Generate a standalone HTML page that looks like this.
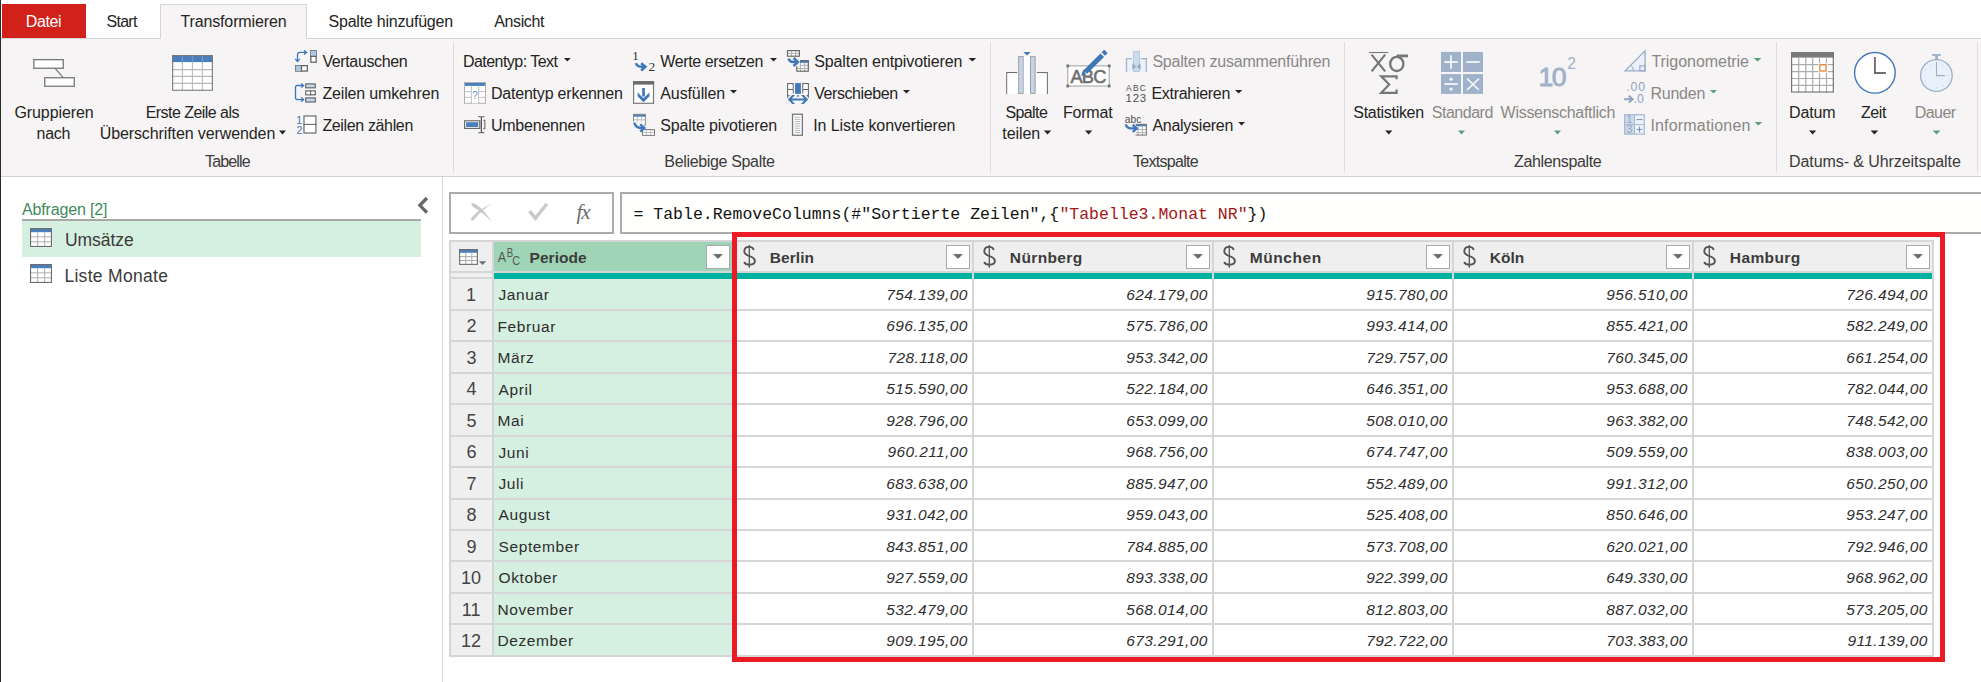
<!DOCTYPE html>
<html><head><meta charset="utf-8"><style>
html,body{margin:0;padding:0;}
body{width:1981px;height:682px;overflow:hidden;position:relative;background:#fff;}
div{position:absolute;}
span{position:absolute;white-space:pre;line-height:20px;}
svg{position:absolute;left:0;top:0;}
</style></head><body>
<div style="left:0px;top:0px;width:1981px;height:39px;background:#ffffff;"></div><div style="left:0px;top:39px;width:1981px;height:137px;background:#f6f4f4;"></div><div style="left:0px;top:176px;width:1981px;height:1px;background:#d4d2d2;"></div><div style="left:0px;top:38px;width:1981px;height:1px;background:#d6d4d4;"></div><div style="left:2px;top:4px;width:84px;height:34px;background:#d2201a;"></div><div style="left:160px;top:4px;width:147px;height:35px;background:#f6f4f4;box-sizing:border-box;border:1px solid #d6d4d4;border-bottom:none"></div><div style="left:453px;top:42px;width:1px;height:131px;background:#dedcdc;"></div><div style="left:990px;top:42px;width:1px;height:131px;background:#dedcdc;"></div><div style="left:1344px;top:42px;width:1px;height:131px;background:#dedcdc;"></div><div style="left:1776px;top:42px;width:1px;height:131px;background:#dedcdc;"></div><div style="left:1977px;top:42px;width:1px;height:131px;background:#dedcdc;"></div><div style="left:0px;top:0px;width:1px;height:682px;background:#2b2b2b;"></div><div style="left:22px;top:219px;width:399px;height:2px;background:#a8a8a8;"></div><div style="left:22px;top:221px;width:399px;height:35.6px;background:#d5efe0;"></div><div style="left:442px;top:177px;width:1px;height:505px;background:#d9d9d9;"></div><div style="left:449px;top:192px;width:165px;height:41.5px;background:#ffffff;box-sizing:border-box;border:2px solid #ababab"></div><div style="left:620px;top:192px;width:1400px;height:41.5px;background:#fffffd;box-sizing:border-box;border:2px solid #ababab"></div><div style="left:449px;top:240px;width:1485px;height:2px;background:#d6d6d6;"></div><div style="left:449px;top:240px;width:2px;height:417px;background:#d6d6d6;"></div><div style="left:451px;top:242px;width:41px;height:29px;background:#efefef;"></div><div style="left:494px;top:242px;width:238px;height:29px;background:#9fd5b6;"></div><div style="left:734px;top:242px;width:238px;height:29px;background:#efefef;"></div><div style="left:974px;top:242px;width:238px;height:29px;background:#efefef;"></div><div style="left:1214px;top:242px;width:238px;height:29px;background:#efefef;"></div><div style="left:1454px;top:242px;width:238px;height:29px;background:#efefef;"></div><div style="left:1694px;top:242px;width:238px;height:29px;background:#efefef;"></div><div style="left:451px;top:271px;width:1483px;height:2px;background:#d6d6d6;"></div><div style="left:451px;top:273px;width:41px;height:4px;background:#efefef;"></div><div style="left:451px;top:277px;width:41px;height:2px;background:#d6d6d6;"></div><div style="left:494px;top:273px;width:1438px;height:6px;background:#01b2a0;"></div><div style="left:492px;top:242px;width:2px;height:415px;background:#d6d6d6;"></div><div style="left:732px;top:242px;width:2px;height:415px;background:#d6d6d6;"></div><div style="left:972px;top:242px;width:2px;height:415px;background:#d6d6d6;"></div><div style="left:1212px;top:242px;width:2px;height:415px;background:#d6d6d6;"></div><div style="left:1452px;top:242px;width:2px;height:415px;background:#d6d6d6;"></div><div style="left:1692px;top:242px;width:2px;height:415px;background:#d6d6d6;"></div><div style="left:1932px;top:242px;width:2px;height:415px;background:#d6d6d6;"></div><div style="left:451px;top:279px;width:41.3px;height:30px;background:#efefef;"></div><div style="left:494px;top:279px;width:238px;height:30px;background:#d5efe0;"></div><div style="left:734px;top:279px;width:238px;height:30px;background:#ffffff;"></div><div style="left:974px;top:279px;width:238px;height:30px;background:#ffffff;"></div><div style="left:1214px;top:279px;width:238px;height:30px;background:#ffffff;"></div><div style="left:1454px;top:279px;width:238px;height:30px;background:#ffffff;"></div><div style="left:1694px;top:279px;width:238px;height:30px;background:#ffffff;"></div><div style="left:451px;top:309px;width:1483px;height:2px;background:#d6d6d6;"></div><div style="left:451px;top:311px;width:41.3px;height:29px;background:#efefef;"></div><div style="left:494px;top:311px;width:238px;height:29px;background:#d5efe0;"></div><div style="left:734px;top:311px;width:238px;height:29px;background:#ffffff;"></div><div style="left:974px;top:311px;width:238px;height:29px;background:#ffffff;"></div><div style="left:1214px;top:311px;width:238px;height:29px;background:#ffffff;"></div><div style="left:1454px;top:311px;width:238px;height:29px;background:#ffffff;"></div><div style="left:1694px;top:311px;width:238px;height:29px;background:#ffffff;"></div><div style="left:451px;top:340px;width:1483px;height:2px;background:#d6d6d6;"></div><div style="left:451px;top:342px;width:41.3px;height:30px;background:#efefef;"></div><div style="left:494px;top:342px;width:238px;height:30px;background:#d5efe0;"></div><div style="left:734px;top:342px;width:238px;height:30px;background:#ffffff;"></div><div style="left:974px;top:342px;width:238px;height:30px;background:#ffffff;"></div><div style="left:1214px;top:342px;width:238px;height:30px;background:#ffffff;"></div><div style="left:1454px;top:342px;width:238px;height:30px;background:#ffffff;"></div><div style="left:1694px;top:342px;width:238px;height:30px;background:#ffffff;"></div><div style="left:451px;top:372px;width:1483px;height:2px;background:#d6d6d6;"></div><div style="left:451px;top:374px;width:41.3px;height:29px;background:#efefef;"></div><div style="left:494px;top:374px;width:238px;height:29px;background:#d5efe0;"></div><div style="left:734px;top:374px;width:238px;height:29px;background:#ffffff;"></div><div style="left:974px;top:374px;width:238px;height:29px;background:#ffffff;"></div><div style="left:1214px;top:374px;width:238px;height:29px;background:#ffffff;"></div><div style="left:1454px;top:374px;width:238px;height:29px;background:#ffffff;"></div><div style="left:1694px;top:374px;width:238px;height:29px;background:#ffffff;"></div><div style="left:451px;top:403px;width:1483px;height:2px;background:#d6d6d6;"></div><div style="left:451px;top:405px;width:41.3px;height:30px;background:#efefef;"></div><div style="left:494px;top:405px;width:238px;height:30px;background:#d5efe0;"></div><div style="left:734px;top:405px;width:238px;height:30px;background:#ffffff;"></div><div style="left:974px;top:405px;width:238px;height:30px;background:#ffffff;"></div><div style="left:1214px;top:405px;width:238px;height:30px;background:#ffffff;"></div><div style="left:1454px;top:405px;width:238px;height:30px;background:#ffffff;"></div><div style="left:1694px;top:405px;width:238px;height:30px;background:#ffffff;"></div><div style="left:451px;top:435px;width:1483px;height:2px;background:#d6d6d6;"></div><div style="left:451px;top:437px;width:41.3px;height:29px;background:#efefef;"></div><div style="left:494px;top:437px;width:238px;height:29px;background:#d5efe0;"></div><div style="left:734px;top:437px;width:238px;height:29px;background:#ffffff;"></div><div style="left:974px;top:437px;width:238px;height:29px;background:#ffffff;"></div><div style="left:1214px;top:437px;width:238px;height:29px;background:#ffffff;"></div><div style="left:1454px;top:437px;width:238px;height:29px;background:#ffffff;"></div><div style="left:1694px;top:437px;width:238px;height:29px;background:#ffffff;"></div><div style="left:451px;top:466px;width:1483px;height:2px;background:#d6d6d6;"></div><div style="left:451px;top:468px;width:41.3px;height:30px;background:#efefef;"></div><div style="left:494px;top:468px;width:238px;height:30px;background:#d5efe0;"></div><div style="left:734px;top:468px;width:238px;height:30px;background:#ffffff;"></div><div style="left:974px;top:468px;width:238px;height:30px;background:#ffffff;"></div><div style="left:1214px;top:468px;width:238px;height:30px;background:#ffffff;"></div><div style="left:1454px;top:468px;width:238px;height:30px;background:#ffffff;"></div><div style="left:1694px;top:468px;width:238px;height:30px;background:#ffffff;"></div><div style="left:451px;top:498px;width:1483px;height:2px;background:#d6d6d6;"></div><div style="left:451px;top:500px;width:41.3px;height:29px;background:#efefef;"></div><div style="left:494px;top:500px;width:238px;height:29px;background:#d5efe0;"></div><div style="left:734px;top:500px;width:238px;height:29px;background:#ffffff;"></div><div style="left:974px;top:500px;width:238px;height:29px;background:#ffffff;"></div><div style="left:1214px;top:500px;width:238px;height:29px;background:#ffffff;"></div><div style="left:1454px;top:500px;width:238px;height:29px;background:#ffffff;"></div><div style="left:1694px;top:500px;width:238px;height:29px;background:#ffffff;"></div><div style="left:451px;top:529px;width:1483px;height:2px;background:#d6d6d6;"></div><div style="left:451px;top:531px;width:41.3px;height:29px;background:#efefef;"></div><div style="left:494px;top:531px;width:238px;height:29px;background:#d5efe0;"></div><div style="left:734px;top:531px;width:238px;height:29px;background:#ffffff;"></div><div style="left:974px;top:531px;width:238px;height:29px;background:#ffffff;"></div><div style="left:1214px;top:531px;width:238px;height:29px;background:#ffffff;"></div><div style="left:1454px;top:531px;width:238px;height:29px;background:#ffffff;"></div><div style="left:1694px;top:531px;width:238px;height:29px;background:#ffffff;"></div><div style="left:451px;top:560px;width:1483px;height:2px;background:#d6d6d6;"></div><div style="left:451px;top:562px;width:41.3px;height:30px;background:#efefef;"></div><div style="left:494px;top:562px;width:238px;height:30px;background:#d5efe0;"></div><div style="left:734px;top:562px;width:238px;height:30px;background:#ffffff;"></div><div style="left:974px;top:562px;width:238px;height:30px;background:#ffffff;"></div><div style="left:1214px;top:562px;width:238px;height:30px;background:#ffffff;"></div><div style="left:1454px;top:562px;width:238px;height:30px;background:#ffffff;"></div><div style="left:1694px;top:562px;width:238px;height:30px;background:#ffffff;"></div><div style="left:451px;top:592px;width:1483px;height:2px;background:#d6d6d6;"></div><div style="left:451px;top:594px;width:41.3px;height:29px;background:#efefef;"></div><div style="left:494px;top:594px;width:238px;height:29px;background:#d5efe0;"></div><div style="left:734px;top:594px;width:238px;height:29px;background:#ffffff;"></div><div style="left:974px;top:594px;width:238px;height:29px;background:#ffffff;"></div><div style="left:1214px;top:594px;width:238px;height:29px;background:#ffffff;"></div><div style="left:1454px;top:594px;width:238px;height:29px;background:#ffffff;"></div><div style="left:1694px;top:594px;width:238px;height:29px;background:#ffffff;"></div><div style="left:451px;top:623px;width:1483px;height:2px;background:#d6d6d6;"></div><div style="left:451px;top:625px;width:41.3px;height:30px;background:#efefef;"></div><div style="left:494px;top:625px;width:238px;height:30px;background:#d5efe0;"></div><div style="left:734px;top:625px;width:238px;height:30px;background:#ffffff;"></div><div style="left:974px;top:625px;width:238px;height:30px;background:#ffffff;"></div><div style="left:1214px;top:625px;width:238px;height:30px;background:#ffffff;"></div><div style="left:1454px;top:625px;width:238px;height:30px;background:#ffffff;"></div><div style="left:1694px;top:625px;width:238px;height:30px;background:#ffffff;"></div><div style="left:451px;top:655px;width:1483px;height:2px;background:#d6d6d6;"></div><div style="left:946.2px;top:245.2px;width:23.8px;height:23.5px;background:#ffffff;box-sizing:border-box;border:1px solid #a9a9a9"></div><div style="left:1186.2px;top:245.2px;width:23.8px;height:23.5px;background:#ffffff;box-sizing:border-box;border:1px solid #a9a9a9"></div><div style="left:1426.2px;top:245.2px;width:23.8px;height:23.5px;background:#ffffff;box-sizing:border-box;border:1px solid #a9a9a9"></div><div style="left:1666.2px;top:245.2px;width:23.8px;height:23.5px;background:#ffffff;box-sizing:border-box;border:1px solid #a9a9a9"></div><div style="left:1906.2px;top:245.2px;width:23.8px;height:23.5px;background:#ffffff;box-sizing:border-box;border:1px solid #a9a9a9"></div><div style="left:706.1px;top:245.2px;width:23.6px;height:23.8px;background:#ffffff;box-sizing:border-box;border:1px solid #a9a9a9"></div><div style="left:732px;top:232px;width:1213px;height:430px;background:transparent;box-sizing:border-box;border:5px solid #ea1b24"></div>
<svg width="1981" height="682" viewBox="0 0 1981 682"><polygon points="279,130.5 286,130.5 282.5,134.5" fill="#252423"/><polygon points="1043.8,130.5 1051.2,130.5 1047.5,134.5" fill="#252423"/><polygon points="1084.9,130.5 1092.3,130.5 1088.6,134.5" fill="#252423"/><polygon points="1385.2,130.5 1392.4,130.5 1388.8000000000002,134.5" fill="#252423"/><polygon points="1458,130.5 1465,130.5 1461.5,134.5" fill="#5a9e78"/><polygon points="1554,130.5 1561,130.5 1557.5,134.5" fill="#5a9e78"/><polygon points="1809,130.5 1816.2,130.5 1812.6,134.5" fill="#252423"/><polygon points="1870.6,130.5 1878.2,130.5 1874.4,134.5" fill="#252423"/><polygon points="1932.8,130.5 1940.4,130.5 1936.6,134.5" fill="#5a9e78"/><polygon points="564,58 570.7,58 567.35,61.5" fill="#252423"/><polygon points="770,58 777,58 773.5,61.5" fill="#252423"/><polygon points="730,90 737,90 733.5,93.5" fill="#252423"/><polygon points="968.5,58 976.2,58 972.35,61.5" fill="#252423"/><polygon points="903,90 910,90 906.5,93.5" fill="#252423"/><polygon points="1235,90 1242.3,90 1238.65,93.5" fill="#252423"/><polygon points="1238.2,122 1245,122 1241.6,125.5" fill="#252423"/><polygon points="1753.6,58 1761.4,58 1757.5,61.5" fill="#5a9e78"/><polygon points="1710,90 1717,90 1713.5,93.5" fill="#5a9e78"/><polygon points="1754.6,122 1762.2,122 1758.4,125.5" fill="#5a9e78"/><g transform="translate(0,0)"><path d="M753.9,249.8 C753,247.8 751.2,246.9 749.1,246.9 C746.1,246.9 744.3,248.6 744.3,251.2 C744.3,254.2 746.8,255.1 749.6,256.1 C752.8,257.2 754.9,258.6 754.9,261.1 C754.9,263.4 752.8,264.7 749.5,264.7 C746.9,264.7 745,263.7 744.1,262" fill="none" stroke="#555" stroke-width="1.9"/><line x1="749.3" y1="245.1" x2="749.3" y2="267.7" stroke="#555" stroke-width="1.3"/></g><polygon points="953,254 963,254 958.0,259" fill="#6e6e6e"/><g transform="translate(240,0)"><path d="M753.9,249.8 C753,247.8 751.2,246.9 749.1,246.9 C746.1,246.9 744.3,248.6 744.3,251.2 C744.3,254.2 746.8,255.1 749.6,256.1 C752.8,257.2 754.9,258.6 754.9,261.1 C754.9,263.4 752.8,264.7 749.5,264.7 C746.9,264.7 745,263.7 744.1,262" fill="none" stroke="#555" stroke-width="1.9"/><line x1="749.3" y1="245.1" x2="749.3" y2="267.7" stroke="#555" stroke-width="1.3"/></g><polygon points="1193,254 1203,254 1198.0,259" fill="#6e6e6e"/><g transform="translate(480,0)"><path d="M753.9,249.8 C753,247.8 751.2,246.9 749.1,246.9 C746.1,246.9 744.3,248.6 744.3,251.2 C744.3,254.2 746.8,255.1 749.6,256.1 C752.8,257.2 754.9,258.6 754.9,261.1 C754.9,263.4 752.8,264.7 749.5,264.7 C746.9,264.7 745,263.7 744.1,262" fill="none" stroke="#555" stroke-width="1.9"/><line x1="749.3" y1="245.1" x2="749.3" y2="267.7" stroke="#555" stroke-width="1.3"/></g><polygon points="1433,254 1443,254 1438.0,259" fill="#6e6e6e"/><g transform="translate(720,0)"><path d="M753.9,249.8 C753,247.8 751.2,246.9 749.1,246.9 C746.1,246.9 744.3,248.6 744.3,251.2 C744.3,254.2 746.8,255.1 749.6,256.1 C752.8,257.2 754.9,258.6 754.9,261.1 C754.9,263.4 752.8,264.7 749.5,264.7 C746.9,264.7 745,263.7 744.1,262" fill="none" stroke="#555" stroke-width="1.9"/><line x1="749.3" y1="245.1" x2="749.3" y2="267.7" stroke="#555" stroke-width="1.3"/></g><polygon points="1673,254 1683,254 1678.0,259" fill="#6e6e6e"/><g transform="translate(960,0)"><path d="M753.9,249.8 C753,247.8 751.2,246.9 749.1,246.9 C746.1,246.9 744.3,248.6 744.3,251.2 C744.3,254.2 746.8,255.1 749.6,256.1 C752.8,257.2 754.9,258.6 754.9,261.1 C754.9,263.4 752.8,264.7 749.5,264.7 C746.9,264.7 745,263.7 744.1,262" fill="none" stroke="#555" stroke-width="1.9"/><line x1="749.3" y1="245.1" x2="749.3" y2="267.7" stroke="#555" stroke-width="1.3"/></g><polygon points="1913,254 1923,254 1918.0,259" fill="#6e6e6e"/><polygon points="713,254 723,254 718.0,259" fill="#6e6e6e"/><rect x="33.85" y="59.65" width="29.40" height="8.60" fill="#fff" stroke="#767676" stroke-width="1.3"/><rect x="44.75" y="77.75" width="29.50" height="8.50" fill="#fff" stroke="#767676" stroke-width="1.3"/><line x1="55.30" y1="68.60" x2="63.00" y2="77.30" stroke="#767676" stroke-width="1.2" stroke-linecap="butt"/><rect x="172.10" y="55.10" width="40.80" height="35.70" fill="#fff"/><rect x="172.10" y="55.10" width="40.80" height="7.00" fill="#4a7fbd"/><line x1="182.40" y1="62.10" x2="182.40" y2="90.80" stroke="#b8b8b8" stroke-width="1.1" stroke-linecap="butt"/><line x1="192.40" y1="62.10" x2="192.40" y2="90.80" stroke="#b8b8b8" stroke-width="1.1" stroke-linecap="butt"/><line x1="202.40" y1="62.10" x2="202.40" y2="90.80" stroke="#b8b8b8" stroke-width="1.1" stroke-linecap="butt"/><line x1="172.10" y1="69.60" x2="212.90" y2="69.60" stroke="#b8b8b8" stroke-width="1.1" stroke-linecap="butt"/><line x1="172.10" y1="76.40" x2="212.90" y2="76.40" stroke="#b8b8b8" stroke-width="1.1" stroke-linecap="butt"/><line x1="172.10" y1="83.40" x2="212.90" y2="83.40" stroke="#b8b8b8" stroke-width="1.1" stroke-linecap="butt"/><rect x="172.65" y="55.65" width="39.70" height="34.60" fill="none" stroke="#787878" stroke-width="1.1"/><line x1="182.40" y1="55.60" x2="182.40" y2="62.10" stroke="#7d9fc8" stroke-width="0.9" stroke-linecap="butt"/><line x1="192.40" y1="55.60" x2="192.40" y2="62.10" stroke="#7d9fc8" stroke-width="0.9" stroke-linecap="butt"/><line x1="202.40" y1="55.60" x2="202.40" y2="62.10" stroke="#7d9fc8" stroke-width="0.9" stroke-linecap="butt"/><rect x="310.85" y="50.65" width="5.30" height="11.60" fill="#fff" stroke="#666" stroke-width="1.3"/><rect x="310.90" y="50.70" width="5.20" height="5.60" fill="#a9c6e3"/><line x1="310.20" y1="56.40" x2="316.80" y2="56.40" stroke="#666" stroke-width="1.2" stroke-linecap="butt"/><rect x="295.75" y="65.65" width="11.60" height="5.40" fill="#fff" stroke="#666" stroke-width="1.3"/><rect x="295.80" y="65.70" width="5.70" height="5.30" fill="#a9c6e3"/><line x1="301.50" y1="65.00" x2="301.50" y2="71.70" stroke="#666" stroke-width="1.2" stroke-linecap="butt"/><path d="M297.5,61 L297.5,55 Q297.5,52.4 300,52.4 L306.4,52.4" fill="none" stroke="#3f78b8" stroke-width="1.3" /><path d="M295.3,58.8 L297.5,61.4 L299.7,58.8" fill="none" stroke="#3f78b8" stroke-width="1.3" /><path d="M304,50.3 L306.6,52.4 L304,54.5" fill="none" stroke="#3f78b8" stroke-width="1.3" /><rect x="305.70" y="83.90" width="9.60" height="3.90" fill="#c5d9ee" stroke="#6a6a6a" stroke-width="1.2"/><rect x="305.70" y="90.90" width="9.60" height="3.90" fill="#fff" stroke="#6a6a6a" stroke-width="1.2"/><rect x="305.70" y="97.90" width="9.60" height="4.10" fill="#c5d9ee" stroke="#6a6a6a" stroke-width="1.2"/><line x1="310.60" y1="90.30" x2="310.60" y2="95.40" stroke="#6a6a6a" stroke-width="1.1" stroke-linecap="butt"/><path d="M303.2,85.5 L297.5,85.5 Q295.5,85.5 295.5,87.5 L295.5,97.6 Q295.5,99.6 297.5,99.6 L303.2,99.6" fill="none" stroke="#3f78b8" stroke-width="1.3" /><path d="M301.2,83.4 L303.6,85.5 L301.2,87.6" fill="none" stroke="#3f78b8" stroke-width="1.3" /><path d="M301.2,97.5 L303.6,99.6 L301.2,101.7" fill="none" stroke="#3f78b8" stroke-width="1.3" /><rect x="304.00" y="116.00" width="11.90" height="17.00" fill="#fff" stroke="#6a6a6a" stroke-width="1.2"/><line x1="303.40" y1="124.40" x2="316.50" y2="124.40" stroke="#6a6a6a" stroke-width="1.1" stroke-linecap="butt"/><text x="296.2" y="123.9" font-family="Liberation Sans" font-size="10.6" fill="#3f78b8">1</text><text x="296.4" y="133.7" font-family="Liberation Sans" font-size="10.6" fill="#3f78b8">2</text><rect x="464.00" y="82.00" width="22.00" height="21.80" fill="#fff"/><rect x="464.00" y="82.00" width="22.00" height="3.90" fill="#4a7fbd"/><line x1="471.40" y1="85.90" x2="471.40" y2="103.80" stroke="#c0c0c0" stroke-width="1.0" stroke-linecap="butt"/><line x1="478.60" y1="85.90" x2="478.60" y2="103.80" stroke="#c0c0c0" stroke-width="1.0" stroke-linecap="butt"/><line x1="464.00" y1="91.60" x2="486.00" y2="91.60" stroke="#c0c0c0" stroke-width="1.0" stroke-linecap="butt"/><line x1="464.00" y1="97.30" x2="486.00" y2="97.30" stroke="#c0c0c0" stroke-width="1.0" stroke-linecap="butt"/><rect x="464.50" y="82.50" width="21.00" height="20.80" fill="none" stroke="#b0b0b0" stroke-width="1.0"/><rect x="471.90" y="86.40" width="6.20" height="16.90" fill="#fff"/><text x="472.3" y="98.6" font-family="Liberation Sans" font-size="10" fill="#5d8ed0">?</text><rect x="464.60" y="120.80" width="15.20" height="7.60" fill="#fff" stroke="#6b6b6b" stroke-width="1.2"/><rect x="466.10" y="122.20" width="12.20" height="4.80" fill="#4a7fbd"/><line x1="481.40" y1="116.80" x2="481.40" y2="132.60" stroke="#555" stroke-width="1.2" stroke-linecap="butt"/><path d="M478.4,116.6 Q481.4,117.2 484.4,116.6" fill="none" stroke="#555" stroke-width="1.0" /><path d="M478.4,132.8 Q481.4,132.2 484.4,132.8" fill="none" stroke="#555" stroke-width="1.0" /><path d="M483.4,120.4 L484.8,120.4 L484.8,128.6 L483.4,128.6" fill="none" stroke="#6b6b6b" stroke-width="1.1" /><text x="632.2" y="60" font-family="Liberation Serif" font-size="13" fill="#333">1</text><text x="648.4" y="71" font-family="Liberation Serif" font-size="13.5" fill="#333">2</text><path d="M635.8,63.2 Q637.5,66.8 641.5,66.8 L645.5,66.8" fill="none" stroke="#3f78b8" stroke-width="2.6" /><path d="M641.2,63.2 L645.4,66.8 L641.2,70.4" fill="none" stroke="#3f78b8" stroke-width="2.6" /><rect x="633.60" y="81.80" width="19.90" height="21.50" fill="#fff" stroke="#7a7a7a" stroke-width="1.2"/><rect x="633.00" y="81.20" width="21.10" height="3.40" fill="#6a6a6a"/><rect x="642.20" y="88.00" width="2.70" height="8.50" fill="#3f78b8"/><polygon points="637.6,92.6 643.55,98.2 649.5,92.6 649.5,96.2 643.55,102.2 637.6,96.2" fill="#3f78b8"/><rect x="633.00" y="113.90" width="12.90" height="11.60" fill="#fff"/><rect x="633.00" y="113.90" width="12.90" height="2.80" fill="#4a7fbd"/><line x1="637.30" y1="116.70" x2="637.30" y2="125.50" stroke="#bdbdbd" stroke-width="1.0" stroke-linecap="butt"/><line x1="641.60" y1="116.70" x2="641.60" y2="125.50" stroke="#bdbdbd" stroke-width="1.0" stroke-linecap="butt"/><line x1="633.00" y1="119.80" x2="645.90" y2="119.80" stroke="#bdbdbd" stroke-width="1.0" stroke-linecap="butt"/><rect x="633.50" y="114.40" width="11.90" height="10.60" fill="none" stroke="#8a8a8a" stroke-width="1.0"/><rect x="642.10" y="129.10" width="12.90" height="6.80" fill="#fff"/><line x1="646.40" y1="129.10" x2="646.40" y2="135.90" stroke="#bdbdbd" stroke-width="1.0" stroke-linecap="butt"/><line x1="650.70" y1="129.10" x2="650.70" y2="135.90" stroke="#bdbdbd" stroke-width="1.0" stroke-linecap="butt"/><line x1="642.10" y1="132.50" x2="655.00" y2="132.50" stroke="#bdbdbd" stroke-width="1.0" stroke-linecap="butt"/><rect x="642.60" y="129.60" width="11.90" height="5.80" fill="none" stroke="#7a7a7a" stroke-width="1.0"/><rect x="632" y="121.6" width="12" height="5" fill="#f6f4f4"/><path d="M634.2,122.6 Q636,128 641,128 L644.2,128" fill="none" stroke="#3f78b8" stroke-width="2.4" /><path d="M640.2,124.4 L644.3,128 L640.2,131.6" fill="none" stroke="#3f78b8" stroke-width="2.4" /><rect x="786.90" y="50.00" width="13.10" height="6.80" fill="#fff"/><line x1="791.50" y1="50.00" x2="791.50" y2="56.80" stroke="#b5b5b5" stroke-width="1.2" stroke-linecap="butt"/><line x1="795.60" y1="50.00" x2="795.60" y2="56.80" stroke="#b5b5b5" stroke-width="1.2" stroke-linecap="butt"/><line x1="786.90" y1="53.40" x2="800.00" y2="53.40" stroke="#b5b5b5" stroke-width="1.2" stroke-linecap="butt"/><rect x="787.50" y="50.60" width="11.90" height="5.60" fill="none" stroke="#6a6a6a" stroke-width="1.2"/><rect x="796.20" y="60.00" width="12.70" height="11.80" fill="#fff"/><rect x="796.20" y="60.00" width="12.70" height="2.90" fill="#4a7fbd"/><line x1="800.50" y1="62.90" x2="800.50" y2="71.80" stroke="#b5b5b5" stroke-width="1.2" stroke-linecap="butt"/><line x1="804.60" y1="62.90" x2="804.60" y2="71.80" stroke="#b5b5b5" stroke-width="1.2" stroke-linecap="butt"/><line x1="796.20" y1="65.40" x2="808.90" y2="65.40" stroke="#b5b5b5" stroke-width="1.2" stroke-linecap="butt"/><line x1="796.20" y1="68.50" x2="808.90" y2="68.50" stroke="#b5b5b5" stroke-width="1.2" stroke-linecap="butt"/><rect x="796.80" y="60.60" width="11.50" height="10.60" fill="none" stroke="#6a6a6a" stroke-width="1.2"/><rect x="795.5" y="57.8" width="4.5" height="8.5" fill="#f6f4f4"/><path d="M788.4,58.6 Q789.6,62 793.5,62 L797.8,62" fill="none" stroke="#3f78b8" stroke-width="2.5" /><path d="M793.6,58 L797.9,62 L793.6,66" fill="none" stroke="#3f78b8" stroke-width="2.5" /><path d="M787.7,97.8 L787.7,83.7 L793.1,83.7 L793.1,89.2" fill="none" stroke="#666" stroke-width="1.2" /><line x1="787.70" y1="89.50" x2="793.10" y2="89.50" stroke="#666" stroke-width="1.1" stroke-linecap="butt"/><line x1="793.10" y1="89.50" x2="793.10" y2="93.50" stroke="#666" stroke-width="1.2" stroke-linecap="butt"/><line x1="787.70" y1="95.60" x2="789.50" y2="95.60" stroke="#666" stroke-width="1.0" stroke-linecap="butt"/><path d="M808.3,97.8 L808.3,83.7 L802.9,83.7 L802.9,93.5" fill="none" stroke="#666" stroke-width="1.2" /><line x1="802.90" y1="89.50" x2="808.30" y2="89.50" stroke="#666" stroke-width="1.1" stroke-linecap="butt"/><line x1="806.50" y1="95.60" x2="808.30" y2="95.60" stroke="#666" stroke-width="1.0" stroke-linecap="butt"/><rect x="788.30" y="84.30" width="4.20" height="4.60" fill="#fff"/><rect x="788.30" y="90.10" width="4.20" height="4.80" fill="#fff"/><rect x="803.50" y="84.30" width="4.20" height="4.60" fill="#fff"/><rect x="803.50" y="90.10" width="4.20" height="4.80" fill="#fff"/><rect x="795.10" y="83.10" width="5.80" height="10.70" fill="#3f78b8"/><polygon points="787.9,99.5 792.2,95 795,95 791.8,98.4 804.2,98.4 801,95 803.8,95 808.1,99.5 803.8,104 801,104 804.2,100.6 791.8,100.6 795,104 792.2,104" fill="#3f78b8"/><polygon points="796.5,96.6 798,94.6 799.5,96.6" fill="#3f78b8"/><rect x="792.55" y="114.25" width="9.80" height="21.00" fill="#fff" stroke="#777" stroke-width="1.3"/><line x1="794.60" y1="117.20" x2="800.30" y2="117.20" stroke="#9a9a9a" stroke-width="0.7" stroke-linecap="butt"/><line x1="794.60" y1="119.40" x2="800.30" y2="119.40" stroke="#9a9a9a" stroke-width="0.7" stroke-linecap="butt"/><line x1="794.60" y1="121.60" x2="800.30" y2="121.60" stroke="#9a9a9a" stroke-width="0.7" stroke-linecap="butt"/><line x1="794.60" y1="123.80" x2="800.30" y2="123.80" stroke="#9a9a9a" stroke-width="0.7" stroke-linecap="butt"/><line x1="794.60" y1="126.00" x2="800.30" y2="126.00" stroke="#9a9a9a" stroke-width="0.7" stroke-linecap="butt"/><line x1="794.60" y1="128.20" x2="800.30" y2="128.20" stroke="#9a9a9a" stroke-width="0.7" stroke-linecap="butt"/><line x1="794.60" y1="130.40" x2="800.30" y2="130.40" stroke="#9a9a9a" stroke-width="0.7" stroke-linecap="butt"/><line x1="794.60" y1="132.60" x2="800.30" y2="132.60" stroke="#9a9a9a" stroke-width="0.7" stroke-linecap="butt"/><path d="M1006.8,93.9 L1006.8,72.6 L1017.2,72.6" fill="none" stroke="#6e6e6e" stroke-width="1.2" /><path d="M1047.3,93.9 L1047.3,72.6 L1036.9,72.6" fill="none" stroke="#6e6e6e" stroke-width="1.2" /><rect x="1007.40" y="73.20" width="10.60" height="20.70" fill="#fff"/><rect x="1036.20" y="73.20" width="10.50" height="20.70" fill="#fff"/><rect x="1018.70" y="56.60" width="4.60" height="36.80" fill="#c3d5ea" stroke="#a0a0a0" stroke-width="1.0"/><rect x="1030.50" y="56.60" width="4.60" height="36.80" fill="#c3d5ea" stroke="#a0a0a0" stroke-width="1.0"/><rect x="1023.80" y="56.60" width="6.20" height="37.30" fill="#fff"/><polygon points="1023.4,52 1030.6,52 1027,55.4" fill="#3f78b8"/><rect x="1067.8" y="65.9" width="41.4" height="20.1" fill="#fff" stroke="#a0a0a0" stroke-width="1"/><rect x="1066.40" y="64.50" width="2.80" height="2.80" fill="#707070"/><rect x="1107.80" y="64.50" width="2.80" height="2.80" fill="#707070"/><rect x="1066.40" y="84.60" width="2.80" height="2.80" fill="#707070"/><rect x="1107.80" y="84.60" width="2.80" height="2.80" fill="#707070"/><text x="1070.4" y="82.8" font-family="Liberation Sans" font-size="18.2" fill="#707070" stroke="#707070" stroke-width="0.6" letter-spacing="-0.7">ABC</text><polygon points="1081.2,75.9 1082.6,71 1086.2,74.5" fill="#3f78b8"/><polygon points="1083.6,70.2 1100.5,53.5 1104,57 1087.1,73.8" fill="#3f78b8"/><polygon points="1101.6,52.3 1104.2,49.7 1107.6,53.1 1105,55.7" fill="#3f78b8"/><polygon points="1083.6,69.8 1087.4,73.6 1085,76 1080.5,77" fill="#fff" opacity="0"/><rect x="1126.50" y="58.60" width="5.80" height="13.40" fill="#eaf2fc"/><rect x="1140.50" y="58.60" width="5.80" height="13.40" fill="#eaf2fc"/><path d="M1126.5,72 L1126.5,58.6 L1131.9,58.6" fill="none" stroke="#a3b5cf" stroke-width="1.3" /><path d="M1146.3,72 L1146.3,58.6 L1140.9,58.6" fill="none" stroke="#a3b5cf" stroke-width="1.3" /><rect x="1133.40" y="51.40" width="6.10" height="20.10" fill="#ccdaec" stroke="#b9c9de" stroke-width="1.0"/><polygon points="1132.3,63.2 1136.4,66.5 1132.3,69.8" fill="#98aac4"/><polygon points="1140.6,63.2 1136.5,66.5 1140.6,69.8" fill="#98aac4"/><text x="1126" y="90.9" font-family="Liberation Sans" font-size="8.4" fill="#505050" letter-spacing="1.3">ABC</text><text x="1125.4" y="101.8" font-family="Liberation Sans" font-size="11.4" fill="#505050" letter-spacing="0.9">123</text><text x="1124.8" y="122.6" font-family="Liberation Sans" font-size="10.2" fill="#505050" letter-spacing="0">abc</text><rect x="1133.80" y="123.90" width="13.10" height="11.70" fill="#fff"/><rect x="1133.80" y="123.90" width="13.10" height="2.50" fill="#4a7fbd"/><line x1="1138.10" y1="126.40" x2="1138.10" y2="135.60" stroke="#b5b5b5" stroke-width="1.1" stroke-linecap="butt"/><line x1="1142.40" y1="126.40" x2="1142.40" y2="135.60" stroke="#b5b5b5" stroke-width="1.1" stroke-linecap="butt"/><line x1="1133.80" y1="129.60" x2="1146.90" y2="129.60" stroke="#b5b5b5" stroke-width="1.1" stroke-linecap="butt"/><line x1="1133.80" y1="132.60" x2="1146.90" y2="132.60" stroke="#b5b5b5" stroke-width="1.1" stroke-linecap="butt"/><rect x="1134.35" y="124.45" width="12.00" height="10.60" fill="none" stroke="#777" stroke-width="1.1"/><rect x="1133" y="123.9" width="2.6" height="12" fill="#f6f4f4"/><path d="M1125.8,124.4 Q1127,128.4 1131,128.4 L1136.6,128.4" fill="none" stroke="#3f78b8" stroke-width="2.3" /><path d="M1132.6,124.8 L1136.8,128.4 L1132.6,132" fill="none" stroke="#3f78b8" stroke-width="2.3" /><line x1="1369.00" y1="52.50" x2="1388.20" y2="52.50" stroke="#777777" stroke-width="1.1" stroke-linecap="butt"/><path d="M1371.6,54.6 L1385.2,71.4 M1385.2,54.6 L1371.6,71.4" fill="none" stroke="#777777" stroke-width="2.2" /><ellipse cx="1396.8" cy="63.9" rx="6.6" ry="7.1" fill="none" stroke="#777777" stroke-width="2.3"/><path d="M1396.6,55.9 L1408,55.9" fill="none" stroke="#777777" stroke-width="2.8" /><path d="M1396.6,79.2 L1396.6,76.3 L1381.2,76.3 L1389.2,84.6 L1381.2,92.8 L1396.6,92.8 L1396.6,89.6" fill="none" stroke="#777777" stroke-width="2.2" stroke-linejoin="miter"/><rect x="1441.00" y="51.90" width="20.00" height="20.10" fill="#a0b1ca"/><rect x="1463.00" y="51.90" width="20.00" height="20.10" fill="#a0b1ca"/><rect x="1441.00" y="74.10" width="20.00" height="19.80" fill="#a0b1ca"/><rect x="1463.00" y="74.10" width="20.00" height="19.80" fill="#a0b1ca"/><line x1="1444.30" y1="62.00" x2="1457.70" y2="62.00" stroke="#f4f7fb" stroke-width="1.8" stroke-linecap="butt"/><line x1="1451.00" y1="55.20" x2="1451.00" y2="68.80" stroke="#f4f7fb" stroke-width="1.8" stroke-linecap="butt"/><line x1="1466.30" y1="62.00" x2="1479.70" y2="62.00" stroke="#f4f7fb" stroke-width="1.8" stroke-linecap="butt"/><line x1="1444.30" y1="84.00" x2="1457.70" y2="84.00" stroke="#f4f7fb" stroke-width="1.8" stroke-linecap="butt"/><circle cx="1451" cy="79.2" r="1.6" fill="#f4f7fb"/><circle cx="1451" cy="89" r="1.6" fill="#f4f7fb"/><line x1="1467.00" y1="78.60" x2="1479.00" y2="90.00" stroke="#f4f7fb" stroke-width="1.7" stroke-linecap="butt"/><line x1="1479.00" y1="78.60" x2="1467.00" y2="90.00" stroke="#f4f7fb" stroke-width="1.7" stroke-linecap="butt"/><text x="1538.4" y="86.2" font-family="Liberation Sans" font-size="26.6" fill="#a0b1ca" stroke="#a0b1ca" stroke-width="0.9" letter-spacing="-1.4">10</text><text x="1567.2" y="68.8" font-family="Liberation Sans" font-size="15.6" fill="#a0b1ca">2</text><polygon points="1625,70.9 1645.1,50.9 1645.1,70.9" fill="#eaf1fb" stroke="#98acc8" stroke-width="1.3" stroke-linejoin="miter"/><rect x="1639.9" y="65.8" width="5.2" height="5.1" fill="none" stroke="#98acc8" stroke-width="1.2"/><path d="M1631.2,65.4 Q1633.4,67.6 1633.6,71" fill="none" stroke="#98acc8" stroke-width="1.0" /><text x="1626.2" y="90.8" font-family="Liberation Sans" font-size="12.2" fill="#8fa2bf" letter-spacing="0.9">.00</text><text x="1633.6" y="102.8" font-family="Liberation Sans" font-size="12.2" fill="#8fa2bf" letter-spacing="0.1">.0</text><path d="M1624.2,99.2 L1632.4,99.2" fill="none" stroke="#8fa2bf" stroke-width="2.0" /><path d="M1628.8,95.8 L1632.6,99.2 L1628.8,102.6" fill="none" stroke="#8fa2bf" stroke-width="2.0" /><rect x="1624.60" y="114.70" width="10.00" height="19.40" fill="#cbd8ea"/><rect x="1634.60" y="114.70" width="9.60" height="19.40" fill="#eaf2fc"/><rect x="1624.6" y="114.7" width="19.6" height="19.4" fill="none" stroke="#a8b8d0" stroke-width="1.2"/><line x1="1634.50" y1="114.70" x2="1634.50" y2="134.10" stroke="#a8b8d0" stroke-width="1.0" stroke-linecap="butt"/><line x1="1624.60" y1="124.60" x2="1644.20" y2="124.60" stroke="#a8b8d0" stroke-width="1.0" stroke-linecap="butt"/><text x="1626.6" y="123.4" font-family="Liberation Sans" font-size="10.5" fill="#94a6c0">1</text><text x="1626.6" y="133.4" font-family="Liberation Sans" font-size="10.5" fill="#94a6c0">3</text><line x1="1636.60" y1="119.60" x2="1642.40" y2="119.60" stroke="#7d90ad" stroke-width="1.0" stroke-linecap="butt"/><line x1="1636.60" y1="129.40" x2="1642.40" y2="129.40" stroke="#7d90ad" stroke-width="1.0" stroke-linecap="butt"/><line x1="1639.50" y1="126.50" x2="1639.50" y2="132.30" stroke="#7d90ad" stroke-width="1.0" stroke-linecap="butt"/><rect x="1791.00" y="52.00" width="42.90" height="40.60" fill="#fff"/><rect x="1791.00" y="52.00" width="42.90" height="5.60" fill="#7a7a7a"/><line x1="1798.70" y1="57.60" x2="1798.70" y2="92.60" stroke="#ababab" stroke-width="1.2" stroke-linecap="butt"/><line x1="1805.80" y1="57.60" x2="1805.80" y2="92.60" stroke="#ababab" stroke-width="1.2" stroke-linecap="butt"/><line x1="1812.70" y1="57.60" x2="1812.70" y2="92.60" stroke="#ababab" stroke-width="1.2" stroke-linecap="butt"/><line x1="1819.50" y1="57.60" x2="1819.50" y2="92.60" stroke="#ababab" stroke-width="1.2" stroke-linecap="butt"/><line x1="1826.50" y1="57.60" x2="1826.50" y2="92.60" stroke="#ababab" stroke-width="1.2" stroke-linecap="butt"/><line x1="1791.00" y1="64.60" x2="1833.90" y2="64.60" stroke="#ababab" stroke-width="1.2" stroke-linecap="butt"/><line x1="1791.00" y1="71.60" x2="1833.90" y2="71.60" stroke="#ababab" stroke-width="1.2" stroke-linecap="butt"/><line x1="1791.00" y1="78.50" x2="1833.90" y2="78.50" stroke="#ababab" stroke-width="1.2" stroke-linecap="butt"/><line x1="1791.00" y1="85.30" x2="1833.90" y2="85.30" stroke="#ababab" stroke-width="1.2" stroke-linecap="butt"/><rect x="1791.60" y="52.60" width="41.70" height="39.40" fill="none" stroke="#777" stroke-width="1.2"/><rect x="1818.40" y="63.30" width="9.40" height="9.50" fill="#fff"/><rect x="1819.9" y="64.7" width="6.2" height="6.3" fill="#fff" stroke="#e07b28" stroke-width="1.2"/><circle cx="1874.9" cy="72.85" r="20.3" fill="#fff" stroke="#4277b8" stroke-width="1.4"/><path d="M1874.9,57 L1874.9,73 L1885.9,73" fill="none" stroke="#6e6e6e" stroke-width="1.9" /><rect x="1935.20" y="55.50" width="2.80" height="4.20" fill="#9db0ca"/><rect x="1932.10" y="54.10" width="8.80" height="1.80" fill="#9db0ca"/><circle cx="1936.4" cy="75.5" r="15.8" fill="#e9f1fb" stroke="#9db0ca" stroke-width="1.3"/><path d="M1936.5,62 L1936.5,75.6 L1944.9,75.6" fill="none" stroke="#9db0ca" stroke-width="1.1" /><circle cx="1942.50" cy="64.93" r="0.45" fill="#9db0ca"/><circle cx="1946.97" cy="69.40" r="0.45" fill="#9db0ca"/><circle cx="1948.60" cy="75.50" r="0.45" fill="#9db0ca"/><circle cx="1946.97" cy="81.60" r="0.45" fill="#9db0ca"/><circle cx="1942.50" cy="86.07" r="0.45" fill="#9db0ca"/><circle cx="1936.40" cy="87.70" r="0.45" fill="#9db0ca"/><circle cx="1930.30" cy="86.07" r="0.45" fill="#9db0ca"/><circle cx="1925.83" cy="81.60" r="0.45" fill="#9db0ca"/><circle cx="1924.20" cy="75.50" r="0.45" fill="#9db0ca"/><circle cx="1925.83" cy="69.40" r="0.45" fill="#9db0ca"/><circle cx="1930.30" cy="64.93" r="0.45" fill="#9db0ca"/><rect x="30.00" y="228.00" width="22.00" height="19.00" fill="#fff"/><rect x="30.00" y="228.00" width="22.00" height="4.20" fill="#4a7fbd"/><line x1="37.60" y1="232.20" x2="37.60" y2="247.00" stroke="#b5b5b5" stroke-width="1.1" stroke-linecap="butt"/><line x1="44.60" y1="232.20" x2="44.60" y2="247.00" stroke="#b5b5b5" stroke-width="1.1" stroke-linecap="butt"/><line x1="30.00" y1="236.80" x2="52.00" y2="236.80" stroke="#b5b5b5" stroke-width="1.1" stroke-linecap="butt"/><line x1="30.00" y1="241.80" x2="52.00" y2="241.80" stroke="#b5b5b5" stroke-width="1.1" stroke-linecap="butt"/><rect x="30.55" y="228.55" width="20.90" height="17.90" fill="none" stroke="#6e6e6e" stroke-width="1.1"/><rect x="30.00" y="264.00" width="22.00" height="19.00" fill="#fff"/><rect x="30.00" y="264.00" width="22.00" height="4.20" fill="#4a7fbd"/><line x1="37.60" y1="268.20" x2="37.60" y2="283.00" stroke="#b5b5b5" stroke-width="1.1" stroke-linecap="butt"/><line x1="44.60" y1="268.20" x2="44.60" y2="283.00" stroke="#b5b5b5" stroke-width="1.1" stroke-linecap="butt"/><line x1="30.00" y1="272.80" x2="52.00" y2="272.80" stroke="#b5b5b5" stroke-width="1.1" stroke-linecap="butt"/><line x1="30.00" y1="277.80" x2="52.00" y2="277.80" stroke="#b5b5b5" stroke-width="1.1" stroke-linecap="butt"/><rect x="30.55" y="264.55" width="20.90" height="17.90" fill="none" stroke="#6e6e6e" stroke-width="1.1"/><path d="M426.9,198.0 L419.9,205.3 L426.9,212.6" fill="none" stroke="#666" stroke-width="3.3" /><path d="M471.5,203.6 Q473.5,202.5 476,204.2 Q485,210.5 491.6,221.6 Q483.5,213 474,207.5 Q470.5,205.6 471.5,203.6 Z" fill="#c9c9c9"/><path d="M471.2,220.4 Q470.5,218.6 472.5,216.6 Q480,208.5 491.8,204.1 Q483,209 474.6,219 Q472.6,221.3 471.2,220.4 Z" fill="#c9c9c9"/><path d="M529.5,211.2 L535.4,218.2 L546.9,203.8" fill="none" stroke="#c9c9c9" stroke-width="3.4" /><text x="576.6" y="219" font-family="Liberation Serif" font-style="italic" font-size="21" fill="#6b6b6b" letter-spacing="-1.2">fx</text><rect x="459.10" y="249.10" width="18.80" height="15.80" fill="#fff"/><rect x="459.10" y="249.10" width="18.80" height="3.70" fill="#4a7fbd"/><line x1="465.70" y1="252.80" x2="465.70" y2="264.90" stroke="#b0b0b0" stroke-width="1.1" stroke-linecap="butt"/><line x1="471.80" y1="252.80" x2="471.80" y2="264.90" stroke="#b0b0b0" stroke-width="1.1" stroke-linecap="butt"/><line x1="459.10" y1="256.60" x2="477.90" y2="256.60" stroke="#b0b0b0" stroke-width="1.1" stroke-linecap="butt"/><line x1="459.10" y1="260.50" x2="477.90" y2="260.50" stroke="#b0b0b0" stroke-width="1.1" stroke-linecap="butt"/><rect x="459.65" y="249.65" width="17.70" height="14.70" fill="none" stroke="#6a6a6a" stroke-width="1.1"/><polygon points="478.9,261.2 486.2,261.2 482.54999999999995,264.9" fill="#6e6e6e"/><text x="497.8" y="261.7" font-family="Liberation Sans" font-size="14.6" fill="#555" transform="translate(497.8,261.7) scale(0.86,1) translate(-497.8,-261.7)">A</text><text x="506.8" y="257.5" font-family="Liberation Sans" font-size="12" fill="#555" transform="translate(506.8,257.5) scale(0.8,1) translate(-506.8,-257.5)">B</text><text x="512.2" y="265" font-family="Liberation Sans" font-size="13.4" fill="#555" transform="translate(512.2,265) scale(0.8,1) translate(-512.2,-265)">C</text></svg>
<span style="left:25.80px;top:13.00px;font:normal normal 16px 'Liberation Sans';color:#ffffff;letter-spacing:-0.399px">Datei</span><span style="left:106.40px;top:13.00px;font:normal normal 16px 'Liberation Sans';color:#252423;letter-spacing:-0.686px">Start</span><span style="left:180.40px;top:13.00px;font:normal normal 16px 'Liberation Sans';color:#252423;letter-spacing:-0.130px">Transformieren</span><span style="left:328.50px;top:13.00px;font:normal normal 16px 'Liberation Sans';color:#252423;letter-spacing:-0.219px">Spalte hinzufügen</span><span style="left:494.30px;top:13.00px;font:normal normal 16px 'Liberation Sans';color:#252423;letter-spacing:-0.404px">Ansicht</span><span style="left:205.00px;top:153.00px;font:normal normal 16px 'Liberation Sans';color:#3b3a39;letter-spacing:-0.834px">Tabelle</span><span style="left:664.30px;top:153.00px;font:normal normal 16px 'Liberation Sans';color:#3b3a39;letter-spacing:-0.336px">Beliebige Spalte</span><span style="left:1133.00px;top:153.00px;font:normal normal 16px 'Liberation Sans';color:#3b3a39;letter-spacing:-0.705px">Textspalte</span><span style="left:1514.00px;top:153.00px;font:normal normal 16px 'Liberation Sans';color:#3b3a39;letter-spacing:-0.356px">Zahlenspalte</span><span style="left:1789.00px;top:153.00px;font:normal normal 16px 'Liberation Sans';color:#3b3a39;letter-spacing:-0.072px">Datums- &amp; Uhrzeitspalte</span><span style="left:14.40px;top:104.00px;font:normal normal 16px 'Liberation Sans';color:#252423;letter-spacing:-0.083px">Gruppieren</span><span style="left:36.60px;top:124.60px;font:normal normal 16px 'Liberation Sans';color:#252423;letter-spacing:-0.332px">nach</span><span style="left:145.70px;top:104.00px;font:normal normal 16px 'Liberation Sans';color:#252423;letter-spacing:-0.541px">Erste Zeile als</span><span style="left:99.70px;top:124.60px;font:normal normal 16px 'Liberation Sans';color:#252423;letter-spacing:-0.103px">Überschriften verwenden</span><span style="left:1005.40px;top:104.00px;font:normal normal 16px 'Liberation Sans';color:#252423;letter-spacing:-0.594px">Spalte</span><span style="left:1002.30px;top:124.60px;font:normal normal 16px 'Liberation Sans';color:#252423;letter-spacing:-0.070px">teilen</span><span style="left:1062.90px;top:104.00px;font:normal normal 16px 'Liberation Sans';color:#252423;letter-spacing:-0.185px">Format</span><span style="left:1353.30px;top:104.00px;font:normal normal 16px 'Liberation Sans';color:#252423;letter-spacing:-0.301px">Statistiken</span><span style="left:1431.80px;top:104.00px;font:normal normal 16px 'Liberation Sans';color:#8a8886;letter-spacing:-0.491px">Standard</span><span style="left:1500.60px;top:104.00px;font:normal normal 16px 'Liberation Sans';color:#8a8886;letter-spacing:-0.290px">Wissenschaftlich</span><span style="left:1789.00px;top:104.00px;font:normal normal 16px 'Liberation Sans';color:#252423;letter-spacing:-0.124px">Datum</span><span style="left:1861.00px;top:104.00px;font:normal normal 16px 'Liberation Sans';color:#252423;letter-spacing:-0.409px">Zeit</span><span style="left:1914.70px;top:104.00px;font:normal normal 16px 'Liberation Sans';color:#8a8886;letter-spacing:-0.537px">Dauer</span><span style="left:322.40px;top:53.00px;font:normal normal 16px 'Liberation Sans';color:#252423;letter-spacing:-0.375px">Vertauschen</span><span style="left:322.40px;top:84.70px;font:normal normal 16px 'Liberation Sans';color:#252423;letter-spacing:-0.162px">Zeilen umkehren</span><span style="left:322.40px;top:116.50px;font:normal normal 16px 'Liberation Sans';color:#252423;letter-spacing:-0.356px">Zeilen zählen</span><span style="left:462.90px;top:53.00px;font:normal normal 16px 'Liberation Sans';color:#252423;letter-spacing:-0.533px">Datentyp: Text</span><span style="left:490.90px;top:84.70px;font:normal normal 16px 'Liberation Sans';color:#252423;letter-spacing:-0.200px">Datentyp erkennen</span><span style="left:490.90px;top:116.50px;font:normal normal 16px 'Liberation Sans';color:#252423;letter-spacing:-0.208px">Umbenennen</span><span style="left:660.30px;top:53.00px;font:normal normal 16px 'Liberation Sans';color:#252423;letter-spacing:-0.400px">Werte ersetzen</span><span style="left:660.30px;top:84.70px;font:normal normal 16px 'Liberation Sans';color:#252423;letter-spacing:-0.115px">Ausfüllen</span><span style="left:660.30px;top:116.50px;font:normal normal 16px 'Liberation Sans';color:#252423;letter-spacing:-0.149px">Spalte pivotieren</span><span style="left:814.20px;top:53.00px;font:normal normal 16px 'Liberation Sans';color:#252423;letter-spacing:-0.101px">Spalten entpivotieren</span><span style="left:814.20px;top:84.70px;font:normal normal 16px 'Liberation Sans';color:#252423;letter-spacing:-0.416px">Verschieben</span><span style="left:813.20px;top:116.50px;font:normal normal 16px 'Liberation Sans';color:#252423;letter-spacing:-0.089px">In Liste konvertieren</span><span style="left:1152.40px;top:53.00px;font:normal normal 16px 'Liberation Sans';color:#8a8886;letter-spacing:-0.206px">Spalten zusammenführen</span><span style="left:1151.40px;top:84.70px;font:normal normal 16px 'Liberation Sans';color:#252423;letter-spacing:-0.292px">Extrahieren</span><span style="left:1152.40px;top:116.50px;font:normal normal 16px 'Liberation Sans';color:#252423;letter-spacing:-0.260px">Analysieren</span><span style="left:1651.40px;top:53.00px;font:normal normal 16px 'Liberation Sans';color:#8a8886;letter-spacing:-0.043px">Trigonometrie</span><span style="left:1650.40px;top:84.70px;font:normal normal 16px 'Liberation Sans';color:#8a8886;letter-spacing:-0.230px">Runden</span><span style="left:1650.40px;top:116.50px;font:normal normal 16px 'Liberation Sans';color:#8a8886;letter-spacing:0.180px">Informationen</span><span style="left:21.90px;top:200.80px;font:normal normal 16px 'Liberation Sans';color:#3f8a5c;letter-spacing:-0.139px">Abfragen [2]</span><span style="left:65.00px;top:229.70px;font:normal normal 17.5px 'Liberation Sans';color:#3b3a39;letter-spacing:-0.068px">Umsätze</span><span style="left:64.40px;top:266.00px;font:normal normal 17.5px 'Liberation Sans';color:#3b3a39;letter-spacing:0.303px">Liste Monate</span><span style="left:633.50px;top:204.60px;font:normal normal 16.5px 'Liberation Mono';color:#111111;letter-spacing:0.000px">= Table.RemoveColumns(#"Sortierte Zeilen",{</span><span style="left:1059.41px;top:204.60px;font:normal normal 16.5px 'Liberation Mono';color:#a31515;letter-spacing:0.000px">"Tabelle3.Monat NR"</span><span style="left:1247.61px;top:204.60px;font:normal normal 16.5px 'Liberation Mono';color:#111111;letter-spacing:0.000px">})</span><span style="left:466.10px;top:285.00px;font:normal normal 18px 'Liberation Sans';color:#444444;letter-spacing:0.000px">1</span><span style="left:498.50px;top:286.20px;font:normal normal 15.5px 'Liberation Sans';color:#2e2e2e;letter-spacing:0.600px">Januar</span><span style="left:886.24px;top:285.80px;font:italic normal 15.5px 'Liberation Sans';color:#2e2e2e;letter-spacing:0.400px">754.139,00</span><span style="left:1126.24px;top:285.80px;font:italic normal 15.5px 'Liberation Sans';color:#2e2e2e;letter-spacing:0.400px">624.179,00</span><span style="left:1366.24px;top:285.80px;font:italic normal 15.5px 'Liberation Sans';color:#2e2e2e;letter-spacing:0.400px">915.780,00</span><span style="left:1606.24px;top:285.80px;font:italic normal 15.5px 'Liberation Sans';color:#2e2e2e;letter-spacing:0.400px">956.510,00</span><span style="left:1846.24px;top:285.80px;font:italic normal 15.5px 'Liberation Sans';color:#2e2e2e;letter-spacing:0.400px">726.494,00</span><span style="left:466.60px;top:316.47px;font:normal normal 18px 'Liberation Sans';color:#444444;letter-spacing:0.000px">2</span><span style="left:497.50px;top:317.67px;font:normal normal 15.5px 'Liberation Sans';color:#2e2e2e;letter-spacing:0.600px">Februar</span><span style="left:886.24px;top:317.27px;font:italic normal 15.5px 'Liberation Sans';color:#2e2e2e;letter-spacing:0.400px">696.135,00</span><span style="left:1126.24px;top:317.27px;font:italic normal 15.5px 'Liberation Sans';color:#2e2e2e;letter-spacing:0.400px">575.786,00</span><span style="left:1366.24px;top:317.27px;font:italic normal 15.5px 'Liberation Sans';color:#2e2e2e;letter-spacing:0.400px">993.414,00</span><span style="left:1606.24px;top:317.27px;font:italic normal 15.5px 'Liberation Sans';color:#2e2e2e;letter-spacing:0.400px">855.421,00</span><span style="left:1846.24px;top:317.27px;font:italic normal 15.5px 'Liberation Sans';color:#2e2e2e;letter-spacing:0.400px">582.249,00</span><span style="left:466.60px;top:347.94px;font:normal normal 18px 'Liberation Sans';color:#444444;letter-spacing:0.000px">3</span><span style="left:497.50px;top:349.14px;font:normal normal 15.5px 'Liberation Sans';color:#2e2e2e;letter-spacing:0.600px">März</span><span style="left:887.40px;top:348.74px;font:italic normal 15.5px 'Liberation Sans';color:#2e2e2e;letter-spacing:0.400px">728.118,00</span><span style="left:1126.24px;top:348.74px;font:italic normal 15.5px 'Liberation Sans';color:#2e2e2e;letter-spacing:0.400px">953.342,00</span><span style="left:1366.24px;top:348.74px;font:italic normal 15.5px 'Liberation Sans';color:#2e2e2e;letter-spacing:0.400px">729.757,00</span><span style="left:1606.24px;top:348.74px;font:italic normal 15.5px 'Liberation Sans';color:#2e2e2e;letter-spacing:0.400px">760.345,00</span><span style="left:1846.24px;top:348.74px;font:italic normal 15.5px 'Liberation Sans';color:#2e2e2e;letter-spacing:0.400px">661.254,00</span><span style="left:466.60px;top:379.41px;font:normal normal 18px 'Liberation Sans';color:#444444;letter-spacing:0.000px">4</span><span style="left:498.50px;top:380.61px;font:normal normal 15.5px 'Liberation Sans';color:#2e2e2e;letter-spacing:0.600px">April</span><span style="left:886.24px;top:380.21px;font:italic normal 15.5px 'Liberation Sans';color:#2e2e2e;letter-spacing:0.400px">515.590,00</span><span style="left:1126.24px;top:380.21px;font:italic normal 15.5px 'Liberation Sans';color:#2e2e2e;letter-spacing:0.400px">522.184,00</span><span style="left:1366.24px;top:380.21px;font:italic normal 15.5px 'Liberation Sans';color:#2e2e2e;letter-spacing:0.400px">646.351,00</span><span style="left:1606.24px;top:380.21px;font:italic normal 15.5px 'Liberation Sans';color:#2e2e2e;letter-spacing:0.400px">953.688,00</span><span style="left:1846.24px;top:380.21px;font:italic normal 15.5px 'Liberation Sans';color:#2e2e2e;letter-spacing:0.400px">782.044,00</span><span style="left:466.60px;top:410.88px;font:normal normal 18px 'Liberation Sans';color:#444444;letter-spacing:0.000px">5</span><span style="left:497.50px;top:412.08px;font:normal normal 15.5px 'Liberation Sans';color:#2e2e2e;letter-spacing:0.600px">Mai</span><span style="left:886.24px;top:411.68px;font:italic normal 15.5px 'Liberation Sans';color:#2e2e2e;letter-spacing:0.400px">928.796,00</span><span style="left:1126.24px;top:411.68px;font:italic normal 15.5px 'Liberation Sans';color:#2e2e2e;letter-spacing:0.400px">653.099,00</span><span style="left:1366.24px;top:411.68px;font:italic normal 15.5px 'Liberation Sans';color:#2e2e2e;letter-spacing:0.400px">508.010,00</span><span style="left:1606.24px;top:411.68px;font:italic normal 15.5px 'Liberation Sans';color:#2e2e2e;letter-spacing:0.400px">963.382,00</span><span style="left:1846.24px;top:411.68px;font:italic normal 15.5px 'Liberation Sans';color:#2e2e2e;letter-spacing:0.400px">748.542,00</span><span style="left:466.60px;top:442.35px;font:normal normal 18px 'Liberation Sans';color:#444444;letter-spacing:0.000px">6</span><span style="left:498.50px;top:443.55px;font:normal normal 15.5px 'Liberation Sans';color:#2e2e2e;letter-spacing:0.600px">Juni</span><span style="left:887.40px;top:443.15px;font:italic normal 15.5px 'Liberation Sans';color:#2e2e2e;letter-spacing:0.400px">960.211,00</span><span style="left:1126.24px;top:443.15px;font:italic normal 15.5px 'Liberation Sans';color:#2e2e2e;letter-spacing:0.400px">968.756,00</span><span style="left:1366.24px;top:443.15px;font:italic normal 15.5px 'Liberation Sans';color:#2e2e2e;letter-spacing:0.400px">674.747,00</span><span style="left:1606.24px;top:443.15px;font:italic normal 15.5px 'Liberation Sans';color:#2e2e2e;letter-spacing:0.400px">509.559,00</span><span style="left:1846.24px;top:443.15px;font:italic normal 15.5px 'Liberation Sans';color:#2e2e2e;letter-spacing:0.400px">838.003,00</span><span style="left:466.60px;top:473.82px;font:normal normal 18px 'Liberation Sans';color:#444444;letter-spacing:0.000px">7</span><span style="left:498.50px;top:475.02px;font:normal normal 15.5px 'Liberation Sans';color:#2e2e2e;letter-spacing:0.600px">Juli</span><span style="left:886.24px;top:474.62px;font:italic normal 15.5px 'Liberation Sans';color:#2e2e2e;letter-spacing:0.400px">683.638,00</span><span style="left:1126.24px;top:474.62px;font:italic normal 15.5px 'Liberation Sans';color:#2e2e2e;letter-spacing:0.400px">885.947,00</span><span style="left:1366.24px;top:474.62px;font:italic normal 15.5px 'Liberation Sans';color:#2e2e2e;letter-spacing:0.400px">552.489,00</span><span style="left:1606.24px;top:474.62px;font:italic normal 15.5px 'Liberation Sans';color:#2e2e2e;letter-spacing:0.400px">991.312,00</span><span style="left:1846.24px;top:474.62px;font:italic normal 15.5px 'Liberation Sans';color:#2e2e2e;letter-spacing:0.400px">650.250,00</span><span style="left:466.60px;top:505.29px;font:normal normal 18px 'Liberation Sans';color:#444444;letter-spacing:0.000px">8</span><span style="left:498.50px;top:506.49px;font:normal normal 15.5px 'Liberation Sans';color:#2e2e2e;letter-spacing:0.600px">August</span><span style="left:886.24px;top:506.09px;font:italic normal 15.5px 'Liberation Sans';color:#2e2e2e;letter-spacing:0.400px">931.042,00</span><span style="left:1126.24px;top:506.09px;font:italic normal 15.5px 'Liberation Sans';color:#2e2e2e;letter-spacing:0.400px">959.043,00</span><span style="left:1366.24px;top:506.09px;font:italic normal 15.5px 'Liberation Sans';color:#2e2e2e;letter-spacing:0.400px">525.408,00</span><span style="left:1606.24px;top:506.09px;font:italic normal 15.5px 'Liberation Sans';color:#2e2e2e;letter-spacing:0.400px">850.646,00</span><span style="left:1846.24px;top:506.09px;font:italic normal 15.5px 'Liberation Sans';color:#2e2e2e;letter-spacing:0.400px">953.247,00</span><span style="left:466.60px;top:536.76px;font:normal normal 18px 'Liberation Sans';color:#444444;letter-spacing:0.000px">9</span><span style="left:498.50px;top:537.96px;font:normal normal 15.5px 'Liberation Sans';color:#2e2e2e;letter-spacing:0.600px">September</span><span style="left:886.24px;top:537.56px;font:italic normal 15.5px 'Liberation Sans';color:#2e2e2e;letter-spacing:0.400px">843.851,00</span><span style="left:1126.24px;top:537.56px;font:italic normal 15.5px 'Liberation Sans';color:#2e2e2e;letter-spacing:0.400px">784.885,00</span><span style="left:1366.24px;top:537.56px;font:italic normal 15.5px 'Liberation Sans';color:#2e2e2e;letter-spacing:0.400px">573.708,00</span><span style="left:1606.24px;top:537.56px;font:italic normal 15.5px 'Liberation Sans';color:#2e2e2e;letter-spacing:0.400px">620.021,00</span><span style="left:1846.24px;top:537.56px;font:italic normal 15.5px 'Liberation Sans';color:#2e2e2e;letter-spacing:0.400px">792.946,00</span><span style="left:461.09px;top:568.23px;font:normal normal 18px 'Liberation Sans';color:#444444;letter-spacing:0.000px">10</span><span style="left:498.50px;top:569.43px;font:normal normal 15.5px 'Liberation Sans';color:#2e2e2e;letter-spacing:0.600px">Oktober</span><span style="left:886.24px;top:569.03px;font:italic normal 15.5px 'Liberation Sans';color:#2e2e2e;letter-spacing:0.400px">927.559,00</span><span style="left:1126.24px;top:569.03px;font:italic normal 15.5px 'Liberation Sans';color:#2e2e2e;letter-spacing:0.400px">893.338,00</span><span style="left:1366.24px;top:569.03px;font:italic normal 15.5px 'Liberation Sans';color:#2e2e2e;letter-spacing:0.400px">922.399,00</span><span style="left:1606.24px;top:569.03px;font:italic normal 15.5px 'Liberation Sans';color:#2e2e2e;letter-spacing:0.400px">649.330,00</span><span style="left:1846.24px;top:569.03px;font:italic normal 15.5px 'Liberation Sans';color:#2e2e2e;letter-spacing:0.400px">968.962,00</span><span style="left:461.76px;top:599.70px;font:normal normal 18px 'Liberation Sans';color:#444444;letter-spacing:0.000px">11</span><span style="left:497.50px;top:600.90px;font:normal normal 15.5px 'Liberation Sans';color:#2e2e2e;letter-spacing:0.600px">November</span><span style="left:886.24px;top:600.50px;font:italic normal 15.5px 'Liberation Sans';color:#2e2e2e;letter-spacing:0.400px">532.479,00</span><span style="left:1126.24px;top:600.50px;font:italic normal 15.5px 'Liberation Sans';color:#2e2e2e;letter-spacing:0.400px">568.014,00</span><span style="left:1366.24px;top:600.50px;font:italic normal 15.5px 'Liberation Sans';color:#2e2e2e;letter-spacing:0.400px">812.803,00</span><span style="left:1606.24px;top:600.50px;font:italic normal 15.5px 'Liberation Sans';color:#2e2e2e;letter-spacing:0.400px">887.032,00</span><span style="left:1846.24px;top:600.50px;font:italic normal 15.5px 'Liberation Sans';color:#2e2e2e;letter-spacing:0.400px">573.205,00</span><span style="left:461.09px;top:631.17px;font:normal normal 18px 'Liberation Sans';color:#444444;letter-spacing:0.000px">12</span><span style="left:497.50px;top:632.37px;font:normal normal 15.5px 'Liberation Sans';color:#2e2e2e;letter-spacing:0.600px">Dezember</span><span style="left:886.24px;top:631.97px;font:italic normal 15.5px 'Liberation Sans';color:#2e2e2e;letter-spacing:0.400px">909.195,00</span><span style="left:1126.24px;top:631.97px;font:italic normal 15.5px 'Liberation Sans';color:#2e2e2e;letter-spacing:0.400px">673.291,00</span><span style="left:1366.24px;top:631.97px;font:italic normal 15.5px 'Liberation Sans';color:#2e2e2e;letter-spacing:0.400px">792.722,00</span><span style="left:1606.24px;top:631.97px;font:italic normal 15.5px 'Liberation Sans';color:#2e2e2e;letter-spacing:0.400px">703.383,00</span><span style="left:1847.40px;top:631.97px;font:italic normal 15.5px 'Liberation Sans';color:#2e2e2e;letter-spacing:0.400px">911.139,00</span><span style="left:529.60px;top:248.90px;font:normal bold 15.5px 'Liberation Sans';color:#3c3c3c;letter-spacing:0.028px">Periode</span><span style="left:769.80px;top:248.90px;font:normal bold 15.5px 'Liberation Sans';color:#3c3c3c;letter-spacing:0.048px">Berlin</span><span style="left:1009.80px;top:248.90px;font:normal bold 15.5px 'Liberation Sans';color:#3c3c3c;letter-spacing:0.388px">Nürnberg</span><span style="left:1249.80px;top:248.90px;font:normal bold 15.5px 'Liberation Sans';color:#3c3c3c;letter-spacing:0.574px">München</span><span style="left:1489.80px;top:248.90px;font:normal bold 15.5px 'Liberation Sans';color:#3c3c3c;letter-spacing:0.000px">Köln</span><span style="left:1729.80px;top:248.90px;font:normal bold 15.5px 'Liberation Sans';color:#3c3c3c;letter-spacing:0.406px">Hamburg</span>
</body></html>
